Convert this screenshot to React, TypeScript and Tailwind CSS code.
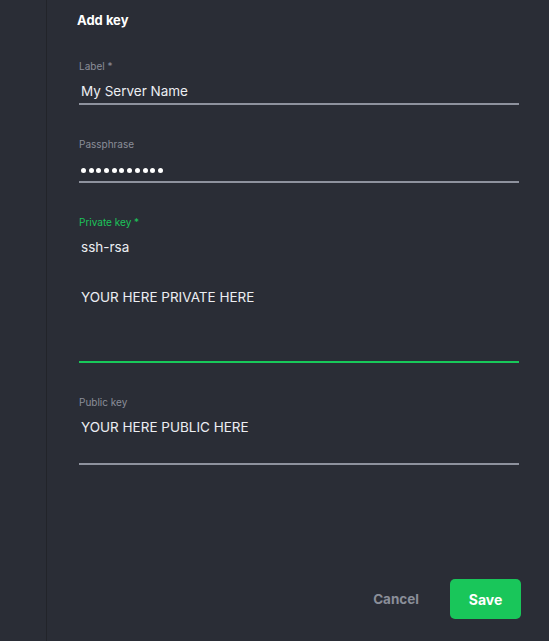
import React from "react";

function Field({
  label,
  children,
  active = false,
  contentH,
}: {
  label: string;
  children: React.ReactNode;
  active?: boolean;
  contentH: string;
}) {
  return (
    <div className="flex flex-col">
      <div
        className={
          "text-[10px] leading-[14px] mb-[5px] " +
          (active ? "text-[#1cc45a]" : "text-[#8a8e99]")
        }
      >
        {label}
      </div>
      <div
        className={
          "pl-[2px] pt-[1px] text-[13.5px] leading-[25px] text-[#eceef2] border-b-2 " +
          contentH +
          " " +
          (active ? "border-[#18c85a]" : "border-[#8e929e]")
        }
      >
        {children}
      </div>
    </div>
  );
}

export default function App() {
  const dots = Array.from({ length: 11 });
  return (
    <div
      className="flex h-[641px] w-[549px] bg-[#2a2d36] overflow-hidden"
      style={{ fontFamily: "Inter, 'Noto Sans', sans-serif" }}
    >
      <div className="w-[47px] shrink-0 border-r border-[#22242a] bg-[#2a2d36]" />
      <div className="flex flex-1 flex-col pl-[32px] pr-[30px]">
        <div className="pt-[10px] text-[13px] leading-[20px] font-bold text-white -ml-[2px]">
          Add key
        </div>
        <div className="mt-[29px] flex flex-col gap-[32px]">
          <Field label="Label *" contentH="h-[27px]">
            My Server Name
          </Field>
          <Field label="Passphrase" contentH="h-[27px]">
            <div className="flex h-[25px] items-center gap-[2.7px] pt-[2px]">
              {dots.map((_, i) => (
                <span key={i} className="block h-[5px] w-[5px] rounded-full bg-white" />
              ))}
            </div>
          </Field>
          <Field label="Private key *" active contentH="h-[129px]">
            <div>ssh-rsa</div>
            <div>&nbsp;</div>
            <div>YOUR HERE PRIVATE HERE</div>
          </Field>
          <Field label="Public key" contentH="h-[51px]">
            YOUR HERE PUBLIC HERE
          </Field>
        </div>
        <div className="mt-auto mb-[22px] flex items-center justify-end gap-[31px] -mr-[2px]">
          <button className="text-[13.5px] font-bold text-[#8a8e99]">Cancel</button>
          <button className="h-[40px] w-[71px] rounded-[5px] bg-[#19c65a] text-[14px] font-bold text-white">
            Save
          </button>
        </div>
      </div>
    </div>
  );
}
